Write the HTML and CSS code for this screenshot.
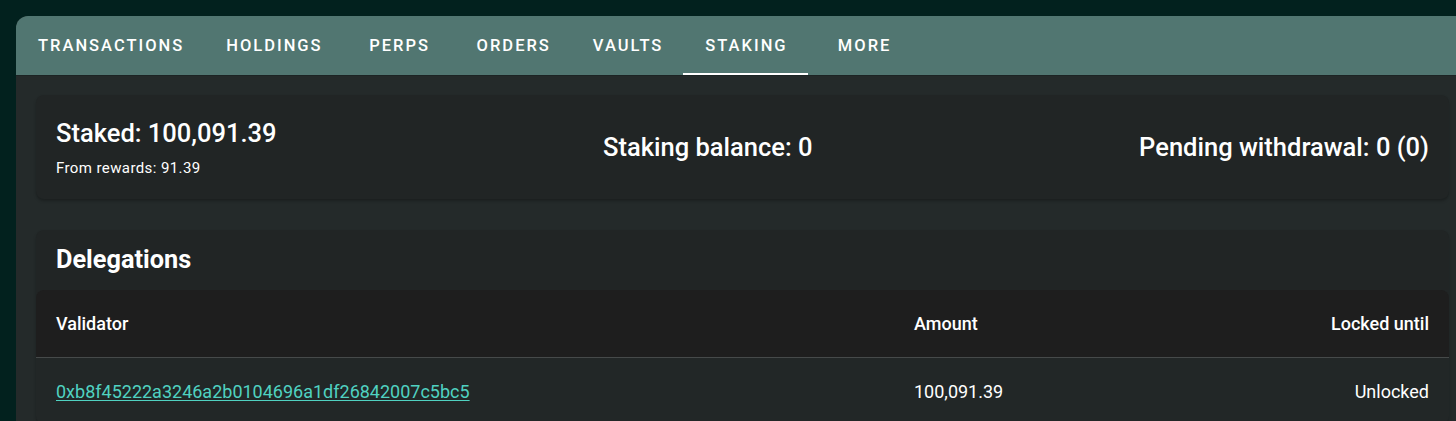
FILE: index.html
```html
<!DOCTYPE html>
<html>
<head>
<meta charset="utf-8">
<link rel="stylesheet" href="styles.css">
</head>
<body>
<div class="panel">
  <nav class="tabs">
    <div class="tab">Transactions</div>
    <div class="tab">Holdings</div>
    <div class="tab">Perps</div>
    <div class="tab">Orders</div>
    <div class="tab">Vaults</div>
    <div class="tab active">Staking</div>
    <div class="tab">More</div>
  </nav>
  <div class="content">
    <section class="card stats">
      <div class="stat-left">
        <div class="stat-main">Staked: 100,091.39</div>
        <div class="stat-sub">From rewards: 91.39</div>
      </div>
      <div class="stat-main">Staking balance: 0</div>
      <div class="stat-main">Pending withdrawal: 0 (0)</div>
    </section>
    <section class="card delegations">
      <h2 class="title">Delegations</h2>
      <table class="table">
        <colgroup>
          <col class="c1"><col class="c2"><col class="c3">
        </colgroup>
        <thead>
          <tr><th>Validator</th><th>Amount</th><th class="right">Locked until</th></tr>
        </thead>
        <tbody>
          <tr><td><a href="#" class="link">0xb8f45222a3246a2b0104696a1df26842007c5bc5</a></td><td>100,091.39</td><td class="right">Unlocked</td></tr>
        </tbody>
      </table>
    </section>
  </div>
</div>
</body>
</html>
```
FILE: styles.css
```css
html, body {
  margin: 0;
  padding: 0;
  background: #02211e;
  height: 100%;
  overflow: hidden;
}
body {
  font-family: Roboto, "Liberation Sans", sans-serif;
  color: #ffffff;
}
.panel {
  margin: 16px 0 0 16px;
  border-radius: 12px 0 0 0;
  background: #242a2a;
  overflow: hidden;
  min-height: 420px;
}
.tabs {
  display: flex;
  height: 59px;
  background: #517671;
  border-bottom: 1px solid #1c2424;
}
.tab {
  position: relative;
  min-width: 112px;
  box-sizing: border-box;
  padding: 0 20px 0 22px;
  display: flex;
  align-items: center;
  justify-content: center;
  font-size: 16.5px;
  font-weight: 500;
  letter-spacing: 2px;
  text-transform: uppercase;
  color: #ffffff;
}
.tab.active::after {
  content: "";
  position: absolute;
  left: 0;
  right: 0;
  bottom: 0;
  height: 2px;
  background: #ffffff;
}
.content {
  padding: 19px 7px 0 20px;
}
.card {
  background: #212525;
  border-radius: 8px;
  box-shadow: 0 2px 3px rgba(0, 0, 0, 0.25);
}
.stats {
  height: 104px;
  box-sizing: border-box;
  padding: 0 20px;
  display: flex;
  align-items: center;
  justify-content: space-between;
}
.stat-main {
  font-size: 25.5px;
  line-height: 28px;
  font-weight: 500;
}
.stat-sub {
  margin-top: 10px;
  margin-bottom: -4px;
  font-size: 15px;
  line-height: 22px;
  letter-spacing: 0.4px;
}
.delegations {
  margin-top: 31px;
  overflow: hidden;
}
.title {
  margin: 0;
  padding: 15px 20px;
  font-size: 25.3px;
  line-height: 30px;
  font-weight: 700;
}
.table {
  width: 100%;
  border-collapse: collapse;
  table-layout: fixed;
  font-size: 18px;
}
.c1 { width: 858px; }
.c2 { width: 300px; }
.table thead tr {
  background: #1e1e1e;
}
.table th {
  height: 67px;
  padding: 0 20px;
  text-align: left;
  font-weight: 500;
  border-bottom: 1px solid #464a4a;
}
.table thead th:first-child { border-top-left-radius: 8px; }
.table thead th:last-child { border-top-right-radius: 8px; }
.table tbody tr {
  background: #222727;
}
.table td {
  height: 66px;
  padding: 0 20px;
  font-weight: 400;
}
.table th.right, .table td.right { text-align: right; }
.link {
  color: #50d2c1;
  text-decoration: underline;
  text-underline-offset: 2px;
}
```
